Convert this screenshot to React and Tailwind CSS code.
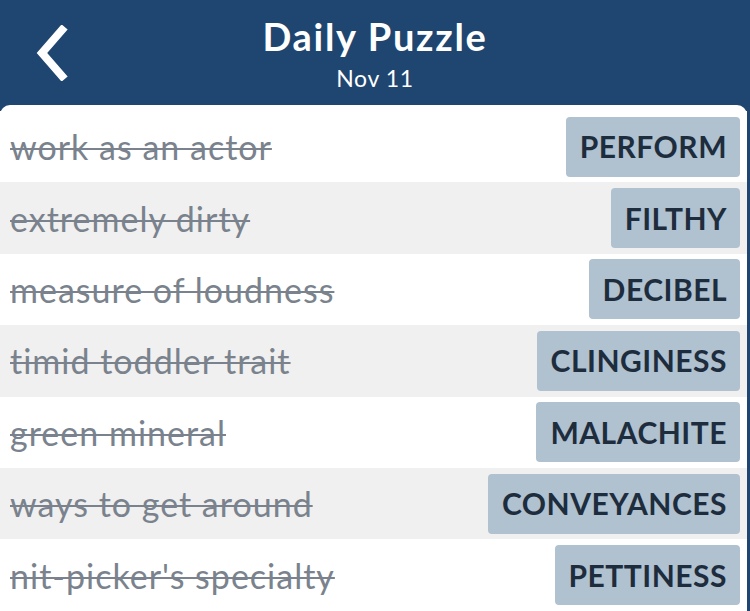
import React from "react";

const rows = [
  ["work as an actor", "PERFORM"],
  ["extremely dirty", "FILTHY"],
  ["measure of loudness", "DECIBEL"],
  ["timid toddler trait", "CLINGINESS"],
  ["green mineral", "MALACHITE"],
  ["ways to get around", "CONVEYANCES"],
  ["nit-picker's specialty", "PETTINESS"],
];

export default function App() {
  return (
    <div
      className="w-[750px] h-[611px] overflow-hidden bg-[#1f4670]"
      style={{ fontFamily: "Lato, 'Open Sans', sans-serif" }}
    >
      <div className="relative h-[105px] flex flex-col items-center">
        <svg
          className="absolute left-[32px] top-[25px]"
          width="40"
          height="56"
          viewBox="0 0 40 56"
        >
          <path
            d="M30 5 L10 28 L30 51"
            fill="none"
            stroke="white"
            strokeWidth="8"
            strokeLinecap="square"
          />
        </svg>
        <div className="mt-[12px] text-[38px] leading-[48px] font-bold tracking-[1.7px] text-white">
          Daily Puzzle
        </div>
        <div className="mt-[4px] text-[23px] leading-[28px] tracking-[0.6px] text-white">
          Nov 11
        </div>
      </div>
      <div className="w-[747px] h-[520px] bg-white rounded-t-[10px] pt-[6px]">
        {rows.map(([clue, ans], i) => (
          <div
            key={i}
            className={`h-[71.4px] flex items-center justify-between pl-[10px] pr-[7px] ${
              i % 2 === 1 ? "bg-[#f0f0f0]" : "bg-white"
            }`}
          >
            <span className="text-[34px] tracking-[1px] text-[#7a838d] line-through decoration-[1.5px]">
              {clue}
            </span>
            <span className="h-[60px] flex items-center pl-[14px] pr-[13px] rounded-[4px] bg-[#b0c1d0] text-[#1e2d3d] text-[30px] tracking-[0.5px] font-bold">
              {ans}
            </span>
          </div>
        ))}
      </div>
    </div>
  );
}
